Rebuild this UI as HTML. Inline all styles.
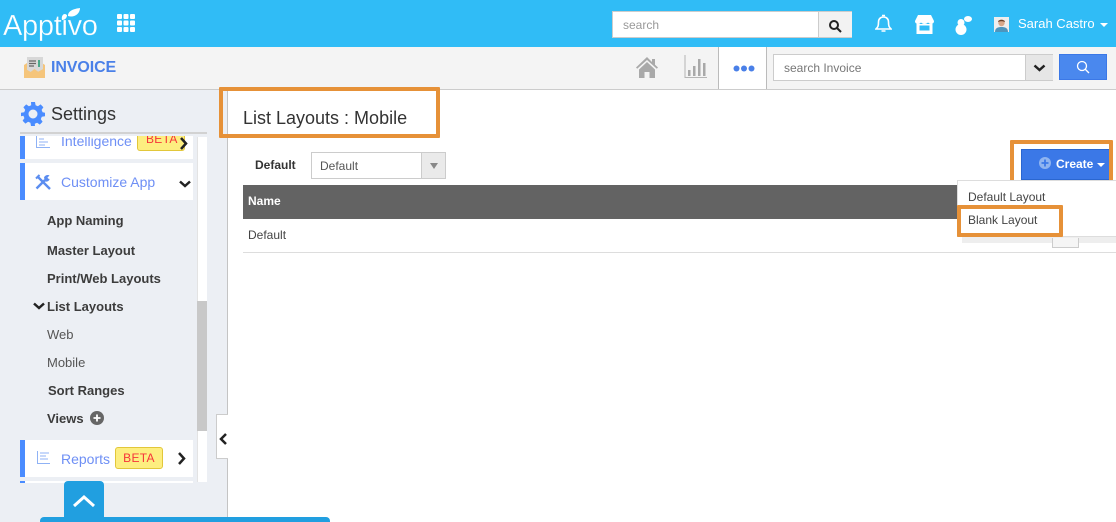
<!DOCTYPE html>
<html><head><meta charset="utf-8"><style>
html,body{margin:0;padding:0}
body{width:1116px;height:522px;overflow:hidden;position:relative;background:#fff;font-family:"Liberation Sans",sans-serif;font-size:13px;color:#333}
.a{position:absolute;white-space:nowrap}
.b{font-weight:bold;color:#3c3c3c;font-size:13px;line-height:16px}
.n{color:#555;font-size:13px;line-height:16px}
.o{position:absolute;border:4px solid #e69138;box-sizing:border-box;border-radius:1px}
.card{position:absolute;left:20px;width:173px;background:#fff;border-left:5px solid #4a8cff;box-sizing:border-box}
.lnk{color:#6e8ff5;font-size:14px;line-height:16px}
.beta{position:absolute;background:#fdee80;border:1px solid #e2c73a;border-radius:3px;color:#f5353a;font-size:12px;letter-spacing:.3px;text-align:center;box-sizing:border-box}
</style></head><body>
<div class="a" style="left:0;top:0;width:1116px;height:47px;background:#30bcf6"></div>
<div class="a" style="left:3px;top:7px;color:#fff;font-size:29px;line-height:38px;letter-spacing:-.3px;-webkit-text-stroke:.3px #30bcf6">Apptivo</div>
<svg class="a" style="left:58px;top:7px" width="24" height="16" viewBox="0 0 24 16"><path d="M4 13C3 8 6 6 9 8 9 11 7 13 4 13Z M10 9C10 4 15 2 22 1 22 7 16 11 10 9Z" fill="#fff"/></svg>
<svg class="a" style="left:117px;top:14px" width="18" height="18" fill="#fff"><rect width="5" height="5" rx="1"/><rect x="6.500" width="5" height="5" rx="1"/><rect x="13" width="5" height="5" rx="1"/><rect y="6.500" width="5" height="5" rx="1"/><rect x="6.500" y="6.500" width="5" height="5" rx="1"/><rect x="13" y="6.500" width="5" height="5" rx="1"/><rect y="13" width="5" height="5" rx="1"/><rect x="6.500" y="13" width="5" height="5" rx="1"/><rect x="13" y="13" width="5" height="5" rx="1"/></svg>

<div class="a" style="left:612px;top:11px;width:240px;height:27px;background:#fff;border:1px solid #ccc;box-sizing:border-box"></div>
<div class="a" style="left:623px;top:18px;color:#999;font-size:12px;line-height:15px">search</div>
<div class="a" style="left:818px;top:12px;width:34px;height:25px;background:#f2f2f2;border-left:1px solid #ccc;box-sizing:border-box"></div>
<svg class="a" style="left:828px;top:19px" width="14" height="14" fill="none" stroke="#222" stroke-width="2"><circle cx="6" cy="6" r="4"/><path d="M9 9l4 4"/></svg>
<svg class="a" style="left:875px;top:14px" width="17" height="19" fill="none" stroke="#fff" stroke-width="1.600"><path d="M1 15c2-2 2.500-3 2.500-7 0-3 2-5 5-5s5 2 5 5c0 4 .5 5 2.500 7Z"/><path d="M7 1.500h3M6.500 17h4"/></svg>
<svg class="a" style="left:915px;top:15px" width="19" height="20"><path d="M3 0h13l3 6c0 2-1.500 3-3 3s-2-1-3-1.500C12 8.500 11 9 9.500 9S7 8.500 6 7.500C5 8.500 4.500 9 3 9S0 8 0 6Z" fill="#fff"/><path d="M1.500 9v10h16V9M4.500 10.500h10v5h-10Z" fill="#fff" fill-rule="evenodd"/></svg>
<svg class="a" style="left:955px;top:15px" width="18" height="20" fill="#fff"><circle cx="6" cy="14.500" r="5.500"/><circle cx="6" cy="7.500" r="3.500"/><ellipse cx="13" cy="4" rx="4" ry="3"/></svg>
<svg class="a" style="left:994px;top:17px" width="15" height="15"><rect width="15" height="15" fill="#eee"/><path d="M1 15c0-4 3-5 6.500-5s6.500 1 6.500 5Z" fill="#4d95bd"/><circle cx="7.500" cy="6" r="3.200" fill="#d8a88a"/><path d="M4 5c0-3 7-3 7 0-2-1-5-1-7 0Z" fill="#6b4028"/></svg>
<div class="a" style="left:1018px;top:16px;color:#fff;font-size:13px;line-height:15px">Sarah Castro</div>
<div class="a" style="left:1100px;top:23px;border:4px solid transparent;border-top-color:#fff;border-bottom:0"></div>

<div class="a" style="left:0;top:47px;width:1116px;height:42px;background:#f4f4f4;border-bottom:1px solid #ccc"></div>
<svg class="a" style="left:24px;top:57px" width="21" height="21"><path d="M0 8L10.500 1 21 8v13H0Z" fill="#f5c57b"/><rect x="3" y="0" width="16" height="15" fill="#d8d8d8"/><path d="M5 4h7M5 6.500h7M5 9h5" stroke="#666" stroke-width="1.200"/><path d="M15 3v7" stroke="#4aa88a" stroke-width="2"/><path d="M0 20L10.500 12 21 20M0 11l10 6 11-6v10H0Z" fill="#f5c57b"/></svg>
<div class="a" style="left:51px;top:58px;color:#4a80e8;font-size:16px;line-height:19px;font-weight:bold;letter-spacing:-.1px">INVOICE</div>
<svg class="a" style="left:636px;top:57px" width="22" height="22" fill="#a9a9a9"><path d="M11 0L0 10.500l1.200 1.200L11 3l9.800 8.700L22 10.500l-3-2.800V2h-3v3Z"/><path d="M3 12.500L11 5l8 7.500V21h-5.500v-6h-5v6H3Z"/></svg>
<svg class="a" style="left:684px;top:55px" width="23" height="24" fill="#a9a9a9"><path d="M1 0v22.500h22" fill="none" stroke="#b5b5b5"/><rect x="4" y="15" width="2.500" height="6"/><rect x="9" y="11" width="2.500" height="10"/><rect x="14" y="4" width="2.500" height="17"/><rect x="19" y="8" width="2.500" height="13"/></svg>
<div class="a" style="left:718px;top:47px;width:49px;height:42px;background:#fff;border-left:1px solid #bbb;border-right:1px solid #bbb;box-sizing:border-box"></div>
<svg class="a" style="left:733px;top:65px" width="22" height="7" fill="#4a80e8"><circle cx="3.500" cy="3.500" r="3"/><circle cx="11" cy="3.500" r="3"/><circle cx="18.500" cy="3.500" r="3"/></svg>
<div class="a" style="left:773px;top:54px;width:280px;height:27px;background:#fff;border:1px solid #ccc;box-sizing:border-box"></div>
<div class="a" style="left:784px;top:61px;color:#777;font-size:12px;line-height:15px">search Invoice</div>
<div class="a" style="left:1025px;top:55px;width:28px;height:25px;background:#e6e6e6;border-left:1px solid #ccc;box-sizing:border-box"></div>
<svg class="a" style="left:1033px;top:64px" width="13" height="8" fill="none" stroke="#222" stroke-width="2.500"><path d="M1.500 1.500L6.500 6l5-4.500"/></svg>
<div class="a" style="left:1059px;top:54px;width:48px;height:26px;background:#4a88ee;border:1px solid #3b78e7;box-sizing:border-box"></div>
<svg class="a" style="left:1076px;top:60px" width="14" height="14" fill="none" stroke="#fff" stroke-width="1.300"><circle cx="6" cy="6" r="4.500"/><path d="M9 9l4 4"/></svg>

<div class="a" style="left:0;top:90px;width:227px;height:432px;background:#eceff4;border-right:1px solid #c4c4c4"></div>
<svg class="a" style="left:21px;top:102px" width="24" height="24" viewBox="0 0 24 24"><path fill="#4a8cff" fill-rule="evenodd" d="M10 0h4l.6 3.200 2.300 1 2.700-1.800 2.800 2.800-1.800 2.700 1 2.300L24 10.800v3.400l-3.200.6-1 2.300 1.800 2.700-2.800 2.800-2.700-1.800-2.300 1L14 24h-4l-.6-3.200-2.300-1-2.700 1.800-2.800-2.800 1.800-2.700-1-2.300L0 14.200v-3.400l3.200-.6 1-2.300-1.800-2.700 2.800-2.800 2.700 1.800 2.300-1ZM12 7.500a4.500 4.500 0 1 0 0 9 4.500 4.500 0 0 0 0-9Z"/></svg>
<div class="a" style="left:51px;top:104px;font-size:18px;line-height:21px;color:#333">Settings</div>
<div class="a" style="left:20px;top:132px;width:187px;height:2px;background:#d2d2d2"></div>

<div class="a" style="left:197px;top:137px;width:10px;height:345px;background:#fff;border-left:1px solid #e3e3e3;box-sizing:border-box"></div>
<div class="a" style="left:197px;top:301px;width:10px;height:130px;background:#c8c8c8"></div>

<div class="card" style="top:136px;height:23px"></div>
<svg class="a" style="left:36px;top:136px" width="14" height="13" fill="none" stroke="#8fb2f5"><path d="M.5 0v11.500H14M3 3h5M3 6h9M3 9h6"/></svg>
<div class="a lnk" style="left:61px;top:133px;clip-path:inset(4px 0 0 0)">Intelligence</div>
<div class="beta" style="left:137px;top:136px;width:48px;height:15px;line-height:6px;border-top:0;border-radius:0 0 3px 3px;overflow:hidden;text-align:left;padding-left:8px">BETA</div>
<svg class="a" style="left:179px;top:136px" width="10" height="15" fill="none" stroke="#222" stroke-width="2.500"><path d="M2 2l5 5.500-5 5.500"/></svg>

<div class="card" style="top:163px;height:37px"></div>
<svg class="a" style="left:35px;top:174px" width="16" height="16" fill="none" stroke="#5b8df0"><path d="M3 3L15 15" stroke-width="2.400"/><path d="M1 4.500L4.500 1" stroke-width="2"/><path d="M10 6L1.500 14.500" stroke-width="2.400"/><path d="M9 3.500C10 1 13 0.500 14.500 1.500L12.500 3.500 13 4.500 14.500 5C14.500 7 12 8 10 7.500Z" fill="#5b8df0" stroke="none"/></svg>
<div class="a lnk" style="left:61px;top:174px">Customize App</div>
<svg class="a" style="left:178px;top:180px" width="14" height="9" fill="none" stroke="#222" stroke-width="2.500"><path d="M2 1.500L7 6l5-4.500"/></svg>

<div class="a b" style="left:47px;top:213px">App Naming</div>
<div class="a b" style="left:47px;top:243px">Master Layout</div>
<div class="a b" style="left:47px;top:271px">Print/Web Layouts</div>
<svg class="a" style="left:32px;top:302px" width="14" height="9" fill="none" stroke="#222" stroke-width="2.500"><path d="M2 1.500L7 6l5-4.500"/></svg>
<div class="a b" style="left:47px;top:299px">List Layouts</div>
<div class="a n" style="left:47px;top:327px">Web</div>
<div class="a n" style="left:47px;top:355px">Mobile</div>
<div class="a b" style="left:48px;top:383px">Sort Ranges</div>
<div class="a b" style="left:47px;top:411px">Views</div>
<svg class="a" style="left:90px;top:411px" width="14" height="14"><circle cx="7" cy="7" r="7" fill="#666"/><path d="M7 3.500v7M3.500 7h7" stroke="#fff" stroke-width="1.800"/></svg>

<div class="card" style="top:440px;height:37px"></div>
<svg class="a" style="left:37px;top:451px" width="13" height="13" fill="none" stroke="#8fb2f5"><path d="M.5 0v12.500H13M3 2h9M3 5h6M3 8h8"/></svg>
<div class="a lnk" style="left:61px;top:451px">Reports</div>
<div class="beta" style="left:115px;top:447px;width:48px;height:22px;line-height:20px">BETA</div>
<svg class="a" style="left:177px;top:451px" width="10" height="15" fill="none" stroke="#222" stroke-width="2.500"><path d="M2 2l5 5.500-5 5.500"/></svg>
<div class="card" style="top:481px;height:2px"></div>

<div class="a" style="left:216px;top:414px;width:12px;height:45px;background:#fff;border:1px solid #ccc;border-right:0;box-sizing:border-box"></div>
<svg class="a" style="left:219px;top:432px" width="10" height="14" fill="none" stroke="#222" stroke-width="2.500"><path d="M7 2L2 7l5 5"/></svg>

<div class="a" style="left:64px;top:481px;width:40px;height:40px;background:#219fe0;border-radius:4px 4px 0 0"></div>
<svg class="a" style="left:72px;top:494px" width="24" height="14" fill="none" stroke="#fff" stroke-width="3"><path d="M2 12L12 3l10 9"/></svg>
<div class="a" style="left:40px;top:517px;width:290px;height:5px;background:#219fe0;border-radius:4px 4px 0 0"></div>

<div class="a" style="left:243px;top:108px;font-size:18px;line-height:21px;color:#333">List Layouts : Mobile</div>
<div class="o" style="left:219px;top:87px;width:221px;height:51px"></div>

<div class="a" style="left:255px;top:158px;font-size:12px;line-height:15px;font-weight:bold;color:#333">Default</div>
<div class="a" style="left:311px;top:152px;width:135px;height:27px;background:#fff;border:1px solid #ccc;box-sizing:border-box"></div>
<div class="a" style="left:320px;top:159px;font-size:12px;line-height:15px;color:#555">Default</div>
<div class="a" style="left:421px;top:153px;width:24px;height:25px;background:#eaeaea;border-left:1px solid #ccc;box-sizing:border-box"></div>
<div class="a" style="left:430px;top:163px;border:4px solid transparent;border-top:6px solid #888;border-bottom:0"></div>

<div class="a" style="left:243px;top:185px;width:873px;height:34px;background:#636363"></div>
<div class="a" style="left:248px;top:194px;font-size:12px;line-height:15px;font-weight:bold;color:#fff">Name</div>
<div class="a" style="left:248px;top:228px;font-size:12px;line-height:15px;color:#444">Default</div>
<div class="a" style="left:243px;top:252px;width:873px;height:1px;background:#ddd"></div>
<div class="a" style="left:962px;top:237px;width:154px;height:6px;background:#eee"></div>
<div class="a" style="left:1052px;top:238px;width:27px;height:10px;background:#f5f5f5;border:1px solid #ccc;border-top:0;box-sizing:border-box"></div>

<div class="a" style="left:1021px;top:149px;width:91px;height:31px;background:#3b78e7;border:1px solid #2a66d0;box-sizing:border-box"></div>
<svg class="a" style="left:1039px;top:157px" width="12" height="12"><circle cx="6" cy="6" r="6" fill="#8fb4f0"/><path d="M6 2.500v7M2.500 6h7" stroke="#3b78e7" stroke-width="1.800"/></svg>
<div class="a" style="left:1056px;top:157px;font-size:12px;line-height:15px;font-weight:bold;color:#fff">Create</div>
<div class="a" style="left:1097px;top:163px;border:4px solid transparent;border-top-color:#fff;border-bottom:0"></div>
<div class="o" style="left:1010px;top:140px;width:103px;height:44px"></div>

<div class="a" style="left:957px;top:180px;width:159px;height:57px;background:#fff;border:1px solid #ddd;border-right:0;box-sizing:border-box"></div>
<div class="a" style="left:968px;top:190px;font-size:12px;line-height:15px;color:#444">Default Layout</div>
<div class="a" style="left:968px;top:213px;font-size:12px;line-height:15px;color:#444">Blank Layout</div>
<div class="o" style="left:957px;top:205px;width:106px;height:32px"></div>
</body></html>
